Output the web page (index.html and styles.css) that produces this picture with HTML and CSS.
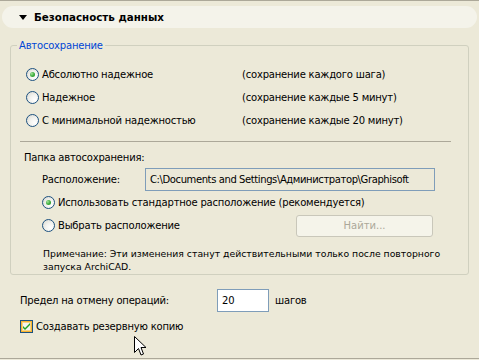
FILE: index.html
```html
<!DOCTYPE html>
<html lang="ru">

<head>
    <meta charset="UTF-8">
    <meta name="viewport" content="width=device-width, initial-scale=1.0">
    <title>Безопасность данных</title>
    <link rel="stylesheet" href="styles.css">
</head>

<body>

    <div class="page">
        <div class="section-head">
            <span class="section-head__arrow"></span>
            <span class="section-head__title">Безопасность данных</span>
        </div>

        <fieldset class="group">
            <legend class="group__legend">Автосохранение</legend>

            <div class="mode">
                <div class="mode__row">
                    <label class="radio radio--on"><span class="radio__box"></span>Абсолютно надежное</label>
                    <span class="mode__hint">(сохранение каждого шага)</span>
                </div>
                <div class="mode__row">
                    <label class="radio"><span class="radio__box"></span>Надежное</label>
                    <span class="mode__hint">(сохранение каждые 5 минут)</span>
                </div>
                <div class="mode__row">
                    <label class="radio"><span class="radio__box"></span>С минимальной надежностью</label>
                    <span class="mode__hint">(сохранение каждые 20 минут)</span>
                </div>
            </div>

            <div class="folder">
                <div class="folder__title">Папка автосохранения:</div>
                <div class="folder__path">
                    <span class="folder__label">Расположение:</span>
                    <div class="field field--path">C:\Documents and Settings\Администратор\Graphisoft</div>
                </div>
                <div class="folder__row">
                    <label class="radio radio--on"><span class="radio__box"></span>Использовать стандартное расположение (рекомендуется)</label>
                </div>
                <div class="folder__row folder__row--pick">
                    <label class="radio"><span class="radio__box"></span>Выбрать расположение</label>
                    <button class="btn" disabled>Найти...</button>
                </div>
                <p class="folder__note">Примечание: Эти изменения станут действительными только после повторного<br>запуска ArchiCAD.</p>
            </div>
        </fieldset>

        <div class="undo">
            <span class="undo__label">Предел на отмену операций:</span>
            <div class="field field--num">20</div>
            <span class="undo__unit">шагов</span>
        </div>

        <label class="check">
            <svg class="check__box" width="13" height="13" viewBox="0 0 13 13">
                <rect x="0.5" y="0.5" width="12" height="12" fill="#f6d58a" stroke="#1c5180"/>
                <rect x="1.5" y="1.5" width="10" height="10" fill="none" stroke="#f8b330"/>
                <rect x="3" y="3" width="7" height="7" fill="#f4f4f0"/>
                <path d="M3 6 L5 8 L10 3 L10 5 L5 10 L3 8 Z" fill="#21a121"/>
            </svg>
            Создавать резервную копию
        </label>

        <svg class="cursor" width="13" height="21" viewBox="0 0 13 21">
            <path d="M0.5 0.5 L0.5 16.5 L4.5 12.5 L7 19 L9.5 18 L7 11.5 L12 11.5 Z" fill="#fff" stroke="#000"/>
        </svg>
    </div>

</body>

</html>
```

FILE: styles.css
```css
html {
    box-sizing: border-box;
}

*,
*:before,
*:after {
    box-sizing: inherit;
}

body {
    margin: 0;
    background: #ece9d8;
    font-family: 'DejaVu Sans', 'Liberation Sans', sans-serif;
    font-size: 10px;
    letter-spacing: -0.2px;
    color: #000;
}

.page {
    position: relative;
    height: 359px;
    overflow: hidden;
    border-top: 1px solid #aca899;
    border-bottom: 1px solid #aca899;
}

.section-head {
    display: flex;
    align-items: center;
    height: 22px;
    margin: 5px 2px 0;
    padding-left: 17px;
    border-radius: 11px;
    background: #f4f3ea;
}

.section-head__arrow {
    width: 0;
    height: 0;
    border-left: 4px solid transparent;
    border-right: 4px solid transparent;
    border-top: 5px solid #000;
    margin-right: 7px;
}

.section-head__title {
    font-weight: bold;
    font-size: 10.3px;
    letter-spacing: 0;
}

.group {
    margin: 12px 10px 0;
    padding: 12px 0 10px;
    height: 235px;
    border: 1px solid #d0d0bf;
    border-radius: 3px;
}

.group__legend {
    margin-left: 6px;
    padding: 0 2px;
    color: #0046d5;
}

/* режимы автосохранения */
.mode {
    padding-left: 15px;
}

.mode__row {
    display: flex;
    align-items: center;
    height: 23px;
}

.mode__row .radio {
    width: 216px;
}

.radio {
    display: flex;
    align-items: center;
}

.radio__box {
    width: 13px;
    height: 13px;
    margin-right: 3px;
    border: 1px solid #1c5180;
    border-radius: 50%;
    background: radial-gradient(circle at 70% 70%, #fff 0%, #f2f2ee 45%, #d6d5cc 100%);
    display: flex;
    align-items: center;
    justify-content: center;
}

.radio--on .radio__box:after {
    content: '';
    width: 5px;
    height: 5px;
    border-radius: 50%;
    background: radial-gradient(circle at 35% 35%, #a6e39c 0%, #3fae3f 50%, #1e8c1e 100%);
}

.folder {
    margin: 9px 17px 0 9px;
    padding-top: 10px;
    border-top: 1px solid #aca899;
}

.folder__title {
    margin-left: 4px;
}

.folder__path {
    display: flex;
    align-items: center;
    margin: 5px 0 0 22px;
}

.folder__label {
    width: 103px;
}

.field {
    background: #fff;
    border: 1px solid #7f9db9;
    display: flex;
    align-items: center;
    padding-left: 4px;
    white-space: nowrap;
    overflow: hidden;
}

.field--path {
    width: 290px;
    height: 23px;
    background: #ece9d8;
    letter-spacing: -0.4px;
}

.folder__row {
    display: flex;
    align-items: center;
    height: 23px;
    margin-left: 22px;
}

.folder__row--pick {
    justify-content: space-between;
    margin-right: 18px;
}

.btn {
    width: 137px;
    height: 22px;
    border: 1px solid #c9c7ba;
    border-radius: 3px;
    background: #f5f4ea;
    color: #aca899;
    font-family: inherit;
    font-size: 10px;
}

.folder__note {
    margin: 10px 0 0 23px;
    font-size: 9.3px;
    letter-spacing: 0;
    line-height: 13px;
}

.undo {
    display: flex;
    align-items: center;
    margin: 14px 0 0 20px;
}

.undo__label {
    width: 197px;
}

.field--num {
    width: 52px;
    height: 23px;
}

.undo__unit {
    margin-left: 6px;
}

.check {
    display: flex;
    align-items: center;
    margin: 8px 0 0 20px;
}

.check__box {
    margin-right: 3px;
}

.cursor {
    position: absolute;
    left: 134px;
    top: 335px;
}
```
